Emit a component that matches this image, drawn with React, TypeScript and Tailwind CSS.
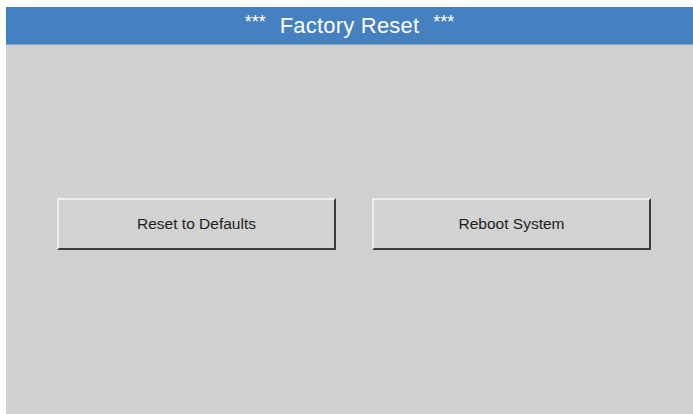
export default function App() {
  return (
    <div className="w-[693px] h-[414px] bg-white pt-[7px] pl-[6px] flex flex-col font-['Liberation_Sans',Arial,sans-serif] select-none">
      <div className="h-[38px] bg-[#4580c0] border-b border-[#8ea6c2] flex items-center justify-center text-white">
        <span className="text-[18px] leading-none relative -top-[4px]">***</span>
        <span className="text-[22px] mx-[14px] leading-none tracking-[0.2px]">Factory Reset</span>
        <span className="text-[18px] leading-none relative -top-[4px]">***</span>
      </div>
      <div className="flex-1 bg-[#cfd1d0] pt-[153px] pl-[51px] pr-[42px] flex gap-[36px] items-start">
        <button className="w-[279px] h-[52px] bg-[#d1d2d1] border-2 border-t-[#eeeeee] border-l-[#eeeeee] border-b-[#3c3c3c] border-r-[#3c3c3c] text-[15.5px] text-[#1e1e1e]">
          Reset to Defaults
        </button>
        <button className="w-[279px] h-[52px] bg-[#d1d2d1] border-2 border-t-[#eeeeee] border-l-[#eeeeee] border-b-[#3c3c3c] border-r-[#3c3c3c] text-[15.5px] text-[#1e1e1e]">
          Reboot System
        </button>
      </div>
    </div>
  );
}
